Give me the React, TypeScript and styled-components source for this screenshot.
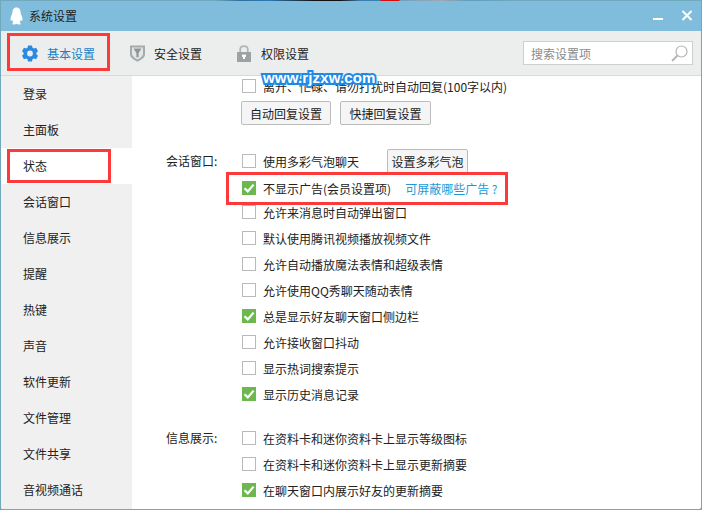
import React from 'react';
import styled, { createGlobalStyle } from 'styled-components';

const Global = createGlobalStyle`
  html, body { margin: 0; padding: 0; background: #6fa9bb; }
  body { font-family: "Noto Sans CJK SC", "Liberation Sans", sans-serif; font-size: 12px; color: #222; }
  * { box-sizing: border-box; }
`;

const Page = styled.div`
  position: relative;
  width: 702px;
  height: 510px;
  overflow: hidden;
  display: flex;
  flex-direction: column;
`;

const DesktopStrip = styled.div`
  height: 1px;
  flex: none;
  background: linear-gradient(90deg, #6fa9bb 0, #6fa9bb 215px, #2f6f9f 240px, #2a7ab0 270px, #111 315px, #111 340px, #3a7fb0 360px, #3a7fb0 380px, #d01010 381px, #d01010 399px, #6d9fc0 400px, #a0a8b0 440px, #5f9cc0 470px, #6fa9bb 515px);
`;

const Win = styled.div`
  flex: 1;
  min-height: 0;
  display: flex;
  flex-direction: column;
  margin: 0 1px 1px 1px;
  background: #fff;
  border-radius: 0 0 2px 2px;
  overflow: hidden;
`;

const TitleBar = styled.div`
  height: 30px;
  flex: none;
  background: #80bddd;
  display: flex;
  align-items: center;
  padding: 0 8px 0 9px;
`;

const TitleText = styled.span`
  margin-left: 6px;
  flex: 1;
  line-height: 30px;
`;

const WinButton = styled.button`
  border: 0;
  background: none;
  padding: 0;
  width: 12px;
  height: 12px;
  display: block;
  margin-left: 17px;
`;

const Toolbar = styled.div`
  height: 45px;
  flex: none;
  background: #eceeee;
  border-bottom: 1px solid #d9d9d9;
  display: flex;
  align-items: center;
  padding: 0 8px 0 21px;
`;

const Tab = styled.div<{ $active?: boolean }>`
  width: 107px;
  display: flex;
  align-items: center;
  gap: 9px;
  color: ${p => (p.$active ? '#1b7fc4' : '#222')};
`;

const IconSlot = styled.span`
  width: 16px;
  height: 18px;
  display: flex;
  align-items: center;
  justify-content: center;
`;

const Search = styled.div`
  margin-left: auto;
  width: 170px;
  height: 24px;
  background: #fff;
  border: 1px solid #cfcfcf;
  display: flex;
  align-items: center;
  justify-content: space-between;
  padding: 0 4px 0 7px;
  color: #8a8a8a;
`;

const Body = styled.div`
  flex: 1;
  min-height: 0;
  display: flex;
`;

const Sidebar = styled.nav`
  width: 131px;
  flex: none;
  background: #f0f0f0;
  display: flex;
  flex-direction: column;
`;

const NavItem = styled.div<{ $active?: boolean }>`
  height: 36px;
  flex: none;
  line-height: 36px;
  padding-left: 22px;
  background: ${p => (p.$active ? '#fff' : 'transparent')};
`;

const Content = styled.main`
  flex: 1;
  min-width: 0;
  overflow: hidden;
  padding-left: 34px;
  margin-top: -3px;
`;

const Section = styled.section<{ $gap?: number }>`
  display: grid;
  grid-template-columns: 76px 1fr;
  margin-top: ${p => p.$gap ?? 0}px;
`;

const SectionLabel = styled.div`
  line-height: 26px;
`;

const Options = styled.div`
  display: flex;
  flex-direction: column;
`;

const Row = styled.div`
  height: 26px;
  flex: none;
  display: flex;
  align-items: center;
`;

const AdRow = styled(Row)`
  margin: 1px 0 -2px;
`;

const Box = styled.span<{ $on?: boolean }>`
  width: 14px;
  height: 14px;
  flex: none;
  margin-right: 7px;
  border: 1px solid ${p => (p.$on ? '#6cb84f' : '#b9b9b9')};
  background: ${p => (p.$on ? '#6cb84f' : '#fff')};
  display: flex;
  align-items: center;
  justify-content: center;
`;

const ButtonRow = styled.div`
  display: flex;
  gap: 9px;
  height: 26px;
  margin-top: 1px;
  align-items: center;
  margin-left: -1px;
`;

const PushButton = styled.button<{ $w: number; $ml?: number }>`
  width: ${p => p.$w}px;
  height: 24px;
  margin-left: ${p => p.$ml ?? 0}px;
  padding: 0;
  font: inherit;
  color: #222;
  background: #f5f5f5;
  border: 1px solid #bcbcbc;
  border-radius: 2px;
`;

const HelpLink = styled.a`
  margin-left: 14px;
  color: #1a9ad6;
`;

const RedBox = styled.div<{ $x: number; $y: number; $w: number; $h: number }>`
  position: absolute;
  left: ${p => p.$x}px;
  top: ${p => p.$y}px;
  width: ${p => p.$w}px;
  height: ${p => p.$h}px;
  border: 3px solid #fd3a3a;
  pointer-events: none;
`;

const Watermark = styled.div`
  position: absolute;
  left: 263px;
  top: 69px;
  font: bold 15px/18px "Liberation Sans", sans-serif;
  letter-spacing: 0.15px;
  color: #fff;
  -webkit-text-stroke: 4px #1f8ae6;
  paint-order: stroke fill;
`;

const Check = () => (
  <svg width="12" height="12" viewBox="0 0 12 12" fill="none">
    <path d="M1.5 6.2 L4.8 9.4 L10.6 2.6" stroke="#fff" strokeWidth="2.2" />
  </svg>
);

const Option = ({ on, children }: { on?: boolean; children: React.ReactNode }) => (
  <Row>
    <Box $on={on}>{on && <Check />}</Box>
    <span>{children}</span>
  </Row>
);

const Penguin = () => (
  <svg width="13" height="18" viewBox="0 0 14 18" preserveAspectRatio="none">
    <path fill="#fff" d="M7 0.5C3.8 0.5 2.6 3 2.6 5.6 2.6 6.4 2.4 7 1.9 7.8 1 9.3 0.4 11 0.6 13.2 0.8 14.4 1.5 14 2.2 12.8 2.5 14 3 14.8 3.7 15.4 2.8 15.8 2.3 16.3 2.5 16.9 2.8 17.6 5.6 17.6 7 16.8 8.4 17.6 11.2 17.6 11.5 16.9 11.7 16.3 11.2 15.8 10.3 15.4 11 14.8 11.5 14 11.8 12.8 12.5 14 13.2 14.4 13.4 13.2 13.6 11 13 9.3 12.1 7.8 11.6 7 11.4 6.4 11.4 5.6 11.4 3 10.2 0.5 7 0.5Z" />
  </svg>
);

const Gear = () => (
  <svg width="16" height="17" viewBox="0 0 16 17">
    <path
      fill="#2a8ae2"
      fillRule="evenodd"
      d="M6 0.5H10L10.5 2.7 11.9 3.5 14.1 2.8 16 6.2 14.4 7.7V9.3L16 10.8 14.1 14.2 11.9 13.5 10.5 14.3 10 16.5H6L5.5 14.3 4.1 13.5 1.9 14.2 0 10.8 1.6 9.3V7.7L0 6.2 1.9 2.8 4.1 3.5 5.5 2.7ZM8 5.6A2.9 2.9 0 1 0 8 11.4 2.9 2.9 0 1 0 8 5.6Z"
    />
  </svg>
);

const Shield = () => (
  <svg width="15" height="17" viewBox="0 0 15 17">
    <path fill="#a5aaab" d="M0 0.5H15V9.5C15 12.5 11 15 7.5 16.8 4 15 0 12.5 0 9.5Z" />
    <path fill="#e4e6e6" d="M2 2.5H13V9C13 11.2 10 13.2 7.5 14.6 5 13.2 2 11.2 2 9Z" />
    <path fill="#8f9596" d="M3.5 3.5H11.5L8.6 8V12.2H6.4V8Z" />
  </svg>
);

const Lock = () => (
  <svg width="14" height="17" viewBox="0 0 14 17">
    <path fill="none" stroke="#b2b6b7" strokeWidth="1.8" d="M3.2 8V4.6C3.2 2.6 4.9 1.2 7 1.2S10.8 2.6 10.8 4.6V8" />
    <rect x="0" y="7" width="14" height="10" fill="#9da2a4" />
    <rect x="6" y="10" width="2" height="4" fill="#fff" />
    <rect x="5" y="9.6" width="4" height="2.2" fill="#fff" />
  </svg>
);

const Magnifier = () => (
  <svg width="17" height="17" viewBox="0 0 17 17" fill="none" stroke="#b5b5b5">
    <circle cx="10.5" cy="6.5" r="5.5" strokeWidth="1.2" />
    <path d="M6.5 10.5 L1 16" strokeWidth="1.8" />
  </svg>
);

const navItems = ['登录', '主面板', '状态', '会话窗口', '信息展示', '提醒', '热键', '声音', '软件更新', '文件管理', '文件共享', '音视频通话'];

export default function App() {
  return (
    <Page>
      <Global />
      <DesktopStrip />
      <Win>
        <TitleBar>
          <Penguin />
          <TitleText>系统设置</TitleText>
          <WinButton aria-label="最小化">
            <svg width="12" height="12" viewBox="0 0 12 12"><rect x="1" y="8" width="10" height="2" fill="#fff" /></svg>
          </WinButton>
          <WinButton aria-label="关闭">
            <svg width="12" height="12" viewBox="0 0 12 12"><path d="M1.5 1 L10.5 10 M10.5 1 L1.5 10" stroke="#fff" strokeWidth="2" /></svg>
          </WinButton>
        </TitleBar>
        <Toolbar>
          <Tab $active><IconSlot><Gear /></IconSlot>基本设置</Tab>
          <Tab><IconSlot><Shield /></IconSlot>安全设置</Tab>
          <Tab><IconSlot><Lock /></IconSlot>权限设置</Tab>
          <Search>搜索设置项<Magnifier /></Search>
        </Toolbar>
        <Body>
          <Sidebar>
            {navItems.map(n => (
              <NavItem key={n} $active={n === '状态'}>{n}</NavItem>
            ))}
          </Sidebar>
          <Content>
            <Section>
              <div />
              <Options>
                <Option>离开、忙碌、请勿打扰时自动回复(100字以内)</Option>
                <ButtonRow>
                  <PushButton $w={90}>自动回复设置</PushButton>
                  <PushButton $w={91}>快捷回复设置</PushButton>
                </ButtonRow>
              </Options>
            </Section>
            <Section $gap={22}>
              <SectionLabel>会话窗口:</SectionLabel>
              <Options>
                <Row>
                  <Box />
                  <span>使用多彩气泡聊天</span>
                  <PushButton $w={81} $ml={28}>设置多彩气泡</PushButton>
                </Row>
                <AdRow>
                  <Box $on><Check /></Box>
                  <span>不显示广告(会员设置项)</span>
                  <HelpLink>可屏蔽哪些广告 ?</HelpLink>
                </AdRow>
                <Option>允许来消息时自动弹出窗口</Option>
                <Option>默认使用腾讯视频播放视频文件</Option>
                <Option>允许自动播放魔法表情和超级表情</Option>
                <Option>允许使用QQ秀聊天随动表情</Option>
                <Option on>总是显示好友聊天窗口侧边栏</Option>
                <Option>允许接收窗口抖动</Option>
                <Option>显示热词搜索提示</Option>
                <Option on>显示历史消息记录</Option>
              </Options>
            </Section>
            <Section $gap={18}>
              <SectionLabel>信息展示:</SectionLabel>
              <Options>
                <Option>在资料卡和迷你资料卡上显示等级图标</Option>
                <Option>在资料卡和迷你资料卡上显示更新摘要</Option>
                <Option on>在聊天窗口内展示好友的更新摘要</Option>
              </Options>
            </Section>
          </Content>
        </Body>
      </Win>
      <RedBox $x={7} $y={33} $w={103} $h={38} />
      <RedBox $x={7} $y={149} $w={104} $h={34} />
      <RedBox $x={226} $y={172} $w={282} $h={33} />
      <Watermark>www.rjzxw.com</Watermark>
    </Page>
  );
}
